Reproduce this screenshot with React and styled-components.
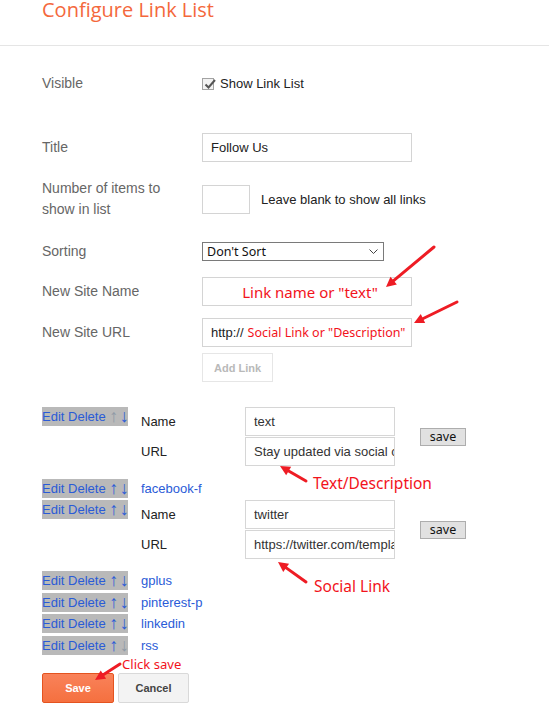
import React from 'react';
import styled, { createGlobalStyle } from 'styled-components';

const Global = createGlobalStyle`
  html, body { margin: 0; padding: 0; background: #fff; }
  body { font-family: "Liberation Sans", Arial, sans-serif; }
  * { box-sizing: border-box; }
`;

const Page = styled.div`
  position: relative;
  width: 549px;
  height: 705px;
  overflow: hidden;
`;

const Header = styled.header`
  height: 46px;
  border-bottom: 1px solid #e5e5e5;
  padding-left: 42px;
  padding-top: 1px;
`;

const Title = styled.h1`
  margin: 0;
  font-family: "Open Sans", "Noto Sans", sans-serif;
  font-weight: 400;
  font-size: 20px;
  line-height: 17px;
  color: #f4683c;
`;

const Body = styled.main`
  padding-left: 42px;
`;

const FormRow = styled.div`
  display: grid;
  grid-template-columns: 160px auto;
  align-items: center;
  margin-top: ${(p) => p.$mt}px;
`;

const Label = styled.div`
  font-size: 14px;
  line-height: 21px;
  color: #666;
  max-width: 128px;
`;

const Field = styled.div`
  display: flex;
  align-items: center;
`;

const CheckBox = styled.span`
  width: 12px;
  height: 12px;
  border: 1px solid #a3a3a3;
  background: #f2f2f2;
  position: relative;
  flex: none;
  svg { position: absolute; left: 0; top: -2px; }
`;

const CheckText = styled.span`
  margin-left: 6px;
  font-size: 13px;
  color: #222;
`;

const TextInput = styled.input`
  width: ${(p) => p.$w || 210}px;
  height: 29px;
  border: 1px solid #d4d4d4;
  padding: 0 8px;
  font-family: "Liberation Sans", Arial, sans-serif;
  font-size: 13px;
  color: #222;
  background: #fff;
  outline: none;
`;

const FakeInput = styled.div`
  width: 210px;
  height: 29px;
  border: 1px solid #d4d4d4;
  display: flex;
  align-items: center;
  justify-content: ${(p) => (p.$center ? 'center' : 'flex-start')};
  padding: 0 0 0 ${(p) => (p.$center ? 6 : 8)}px;
  white-space: nowrap;
  font-size: 13px;
  color: #222;
`;

const Annot = styled.span`
  font-family: "Noto Sans", "Open Sans", sans-serif;
  font-size: ${(p) => p.$size || 15}px;
  color: #f2131c;
  margin-left: ${(p) => p.$ml || 0}px;
`;

const Hint = styled.span`
  margin-left: 11px;
  font-size: 13px;
  color: #222;
`;

const SelectBox = styled.div`
  width: 182px;
  height: 19px;
  border: 1px solid #7a7a7a;
  display: flex;
  align-items: center;
  justify-content: space-between;
  padding: 0 5px 0 4px;
  font-family: "Noto Sans", sans-serif;
  font-size: 12.5px;
  color: #111;
`;

const GhostButton = styled.button`
  width: 71px;
  height: 29px;
  border: 1px solid #e6e6e6;
  background: #fff;
  color: #b9b9b9;
  font-family: "Liberation Sans", Arial, sans-serif;
  font-weight: 700;
  font-size: 11px;
  padding: 0;
`;

const LinkList = styled.div`
  margin-top: 25px;
`;

const Entry = styled.div`
  display: flex;
  align-items: flex-start;
  margin-top: ${(p) => p.$mt || 0}px;
`;

const Controls = styled.div`
  flex: none;
  width: 86px;
  height: 19px;
  line-height: 19px;
  background: #b9b9b9;
  font-size: 13px;
  white-space: nowrap;
  overflow: hidden;
  color: #2a5bd7;
`;

const Ctl = styled.span`
  color: ${(p) => (p.$off ? '#8f9aa6' : '#2a5bd7')};
`;

const ArrowGlyph = styled.span`
  display: inline-block;
  width: 10.5px;
  margin-left: ${(p) => (p.$first ? 3 : 0)}px;
  text-align: center;
  font-size: 18px;
  line-height: 19px;
  vertical-align: top;
  color: ${(p) => (p.$off ? '#8f9aa6' : '#2a5bd7')};
`;

const LinkName = styled.span`
  margin-left: 13px;
  font-size: 13px;
  line-height: 19px;
  color: #2a5bd7;
`;

const Editor = styled.div`
  margin-left: 13px;
  display: grid;
  grid-template-columns: 104px 150px auto;
  grid-template-rows: 29px 29px;
  row-gap: 1px;
  align-items: center;
`;

const EditLabel = styled.span`
  font-size: 13px;
  color: #222;
`;

const EditInput = styled.input`
  width: 150px;
  height: 29px;
  border: 1px solid #d6d6d6;
  padding: 0 0 0 8px;
  font-family: "Liberation Sans", Arial, sans-serif;
  font-size: 13px;
  color: #333;
  background: #fff;
  outline: none;
`;

const SmallSave = styled.button`
  grid-column: 3;
  grid-row: 1 / span 2;
  margin-left: 25px;
  width: 46px;
  height: 18px;
  padding: 0;
  background: #e1e1e1;
  border: 1px solid #adadad;
  font-family: "Noto Sans", sans-serif;
  font-size: 12.5px;
  line-height: 15px;
  color: #111;
`;

const Footer = styled.div`
  display: flex;
  gap: 4px;
  margin-top: 18px;
`;

const ActionButton = styled.button`
  width: ${(p) => (p.$primary ? 72 : 71)}px;
  height: 30px;
  padding: 0;
  font-family: "Liberation Sans", Arial, sans-serif;
  font-weight: 700;
  font-size: 11px;
  border: 1px solid ${(p) => (p.$primary ? '#e4531f' : '#d9d9d9')};
  background: ${(p) => (p.$primary ? 'linear-gradient(#f9825a, #f5703f)' : '#f3f3f3')};
  color: ${(p) => (p.$primary ? '#fff' : '#444')};
  border-radius: 2px;
`;

const Note = styled.span`
  position: absolute;
  left: ${(p) => p.$x}px;
  top: ${(p) => p.$y}px;
  font-family: "Noto Sans", "Open Sans", sans-serif;
  font-size: ${(p) => p.$size}px;
  line-height: 20px;
  color: #f2131c;
  white-space: nowrap;
`;

const Overlay = styled.svg`
  position: absolute;
  left: 0;
  top: 0;
  pointer-events: none;
`;

function Arrow({ x1, y1, x2, y2 }) {
  const dx = x2 - x1;
  const dy = y2 - y1;
  const len = Math.hypot(dx, dy);
  const ux = dx / len;
  const uy = dy / len;
  const hl = 10;
  const hw = 5;
  const bx = x2 - ux * hl;
  const by = y2 - uy * hl;
  const px = -uy;
  const py = ux;
  return (
    <g>
      <line x1={x1} y1={y1} x2={bx + ux * 2} y2={by + uy * 2} stroke="#ee1c24" strokeWidth="3" strokeLinecap="round" />
      <polygon
        points={`${x2},${y2} ${bx + px * hw},${by + py * hw} ${bx - px * hw},${by - py * hw}`}
        fill="#ee1c24"
      />
    </g>
  );
}

function ControlCell({ upOff, downOff }) {
  return (
    <Controls>
      <Ctl>Edit</Ctl> <Ctl>Delete</Ctl>
      <ArrowGlyph $first $off={upOff}>↑</ArrowGlyph>
      <ArrowGlyph $off={downOff}>↓</ArrowGlyph>
    </Controls>
  );
}

function EditEntry({ name, url, mt, first }) {
  return (
    <Entry $mt={mt}>
      <ControlCell upOff={first} />
      <Editor>
        <EditLabel>Name</EditLabel>
        <EditInput readOnly value={name} />
        <SmallSave>save</SmallSave>
        <EditLabel>URL</EditLabel>
        <EditInput readOnly value={url} />
      </Editor>
    </Entry>
  );
}

function SimpleEntry({ name, mt, last }) {
  return (
    <Entry $mt={mt}>
      <ControlCell downOff={last} />
      <LinkName>{name}</LinkName>
    </Entry>
  );
}

export default function App() {
  return (
    <Page>
      <Global />
      <Header>
        <Title>Configure Link List</Title>
      </Header>
      <Body>
        <FormRow $mt={27}>
          <Label>Visible</Label>
          <Field>
            <CheckBox>
              <svg width="14" height="14" viewBox="0 0 14 14">
                <path d="M2.5 7.5 L5.5 10.5 L12 3" fill="none" stroke="#555" strokeWidth="2" />
              </svg>
            </CheckBox>
            <CheckText>Show Link List</CheckText>
          </Field>
        </FormRow>
        <FormRow $mt={39}>
          <Label>Title</Label>
          <Field>
            <TextInput readOnly value="Follow Us" />
          </Field>
        </FormRow>
        <FormRow $mt={16}>
          <Label>Number of items to show in list</Label>
          <Field>
            <TextInput $w={48} readOnly value="" />
            <Hint>Leave blank to show all links</Hint>
          </Field>
        </FormRow>
        <FormRow $mt={21}>
          <Label>Sorting</Label>
          <Field>
            <SelectBox>
              <span>Don't Sort</span>
              <svg width="9" height="6" viewBox="0 0 9 6">
                <path d="M0.5 0.5 L4.5 4.5 L8.5 0.5" fill="none" stroke="#444" strokeWidth="1" />
              </svg>
            </SelectBox>
          </Field>
        </FormRow>
        <FormRow $mt={15}>
          <Label>New Site Name</Label>
          <Field>
            <FakeInput $center>
              <Annot $size={15}>Link name or "text"</Annot>
            </FakeInput>
          </Field>
        </FormRow>
        <FormRow $mt={12}>
          <Label>New Site URL</Label>
          <Field>
            <FakeInput>
              <span>http://</span>
              <Annot $size={12.5} $ml={4}>Social Link or "Description"</Annot>
            </FakeInput>
          </Field>
        </FormRow>
        <FormRow $mt={6}>
          <span />
          <Field>
            <GhostButton>Add Link</GhostButton>
          </Field>
        </FormRow>
        <LinkList>
          <EditEntry mt={0} first name="text" url="Stay updated via social channels" />
          <SimpleEntry mt={13} name="facebook-f" />
          <EditEntry mt={2} name="twitter" url="https://twitter.com/templatesyard" />
          <SimpleEntry mt={12} name="gplus" />
          <SimpleEntry mt={3} name="pinterest-p" />
          <SimpleEntry mt={2} name="linkedin" />
          <SimpleEntry mt={3} name="rss" last />
        </LinkList>
        <Footer>
          <ActionButton $primary>Save</ActionButton>
          <ActionButton>Cancel</ActionButton>
        </Footer>
      </Body>
      <Note $x={313} $y={473} $size={15.5}>Text/Description</Note>
      <Note $x={314} $y={576} $size={15.5}>Social Link</Note>
      <Note $x={122} $y={654} $size={13.1}>Click save</Note>
      <Overlay width="549" height="705" viewBox="0 0 549 705">
        <Arrow x1={434} y1={247} x2={386} y2={287} />
        <Arrow x1={457} y1={302} x2={414} y2={323} />
        <Arrow x1={306} y1={481} x2={280} y2={466} />
        <Arrow x1={306} y1={582} x2={278} y2={562} />
        <Arrow x1={120} y1={664} x2={95} y2={680} />
      </Overlay>
    </Page>
  );
}
